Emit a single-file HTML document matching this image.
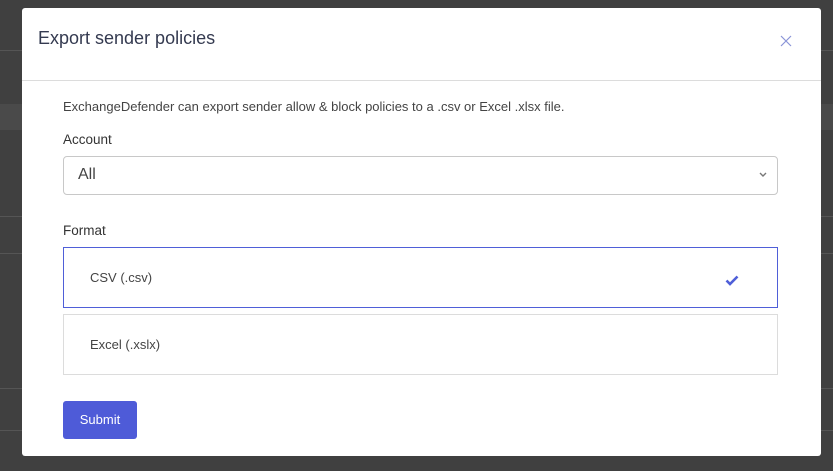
<!DOCTYPE html>
<html><head><style>
body{margin:0;width:833px;height:471px;background:#404040;font-family:"Liberation Sans",sans-serif;position:relative;overflow:hidden}
.bg{position:absolute;left:0;width:833px}
.m{position:absolute;left:22px;top:8px;width:799px;height:448px;background:#fff;border-radius:3px}
.t{position:absolute;left:16px;top:20px;font-size:18px;color:#343a50}
.x{position:absolute;left:758px;top:27px}
.hr{position:absolute;left:0;top:72px;width:799px;height:1px;background:#dcdcdc}
.p{position:absolute;left:41px;top:91px;font-size:13px;color:#444}
.l{position:absolute;left:41px;font-size:13.5px;color:#333}
.sel{position:absolute;left:41px;top:148px;width:713px;height:37px;border:1px solid #c8c8c8;border-radius:4px}
.sel span{position:absolute;left:14px;top:9px;font-size:16px;color:#444}
.box{position:absolute;left:41px;width:715px;border:1px solid #dcdcdc;box-sizing:border-box}
.box span{position:absolute;left:26px;top:22px;font-size:13px;color:#444}
.btn{position:absolute;left:41px;top:393px;width:74px;height:38px;background:#4e5bd8;border-radius:3px;color:#fff;font-size:13px;text-align:center;line-height:38px}
</style></head><body>
<div class="bg" style="top:50px;height:1px;background:#555"></div>
<div class="bg" style="top:104px;height:26px;background:#4a4a4a"></div>
<div class="bg" style="top:216px;height:1px;background:#555"></div>
<div class="bg" style="top:253px;height:1px;background:#555"></div>
<div class="bg" style="top:388px;height:1px;background:#555"></div>
<div class="bg" style="top:430px;height:1px;background:#555"></div>
<div class="m">
<div class="t">Export sender policies</div>
<svg class="x" width="12" height="12" viewBox="0 0 12 12"><path d="M1 1L11 11M11 1L1 11" stroke="#8a94d8" stroke-width="1.2"/></svg>
<div class="hr"></div>
<div class="p">ExchangeDefender can export sender allow &amp; block policies to a .csv or Excel .xlsx file.</div>
<div class="l" style="top:124px">Account</div>
<div class="sel"><span>All</span><svg style="position:absolute;right:10px;top:15px" width="8" height="6" viewBox="0 0 8 6"><path d="M1 1L4 4L7 1" stroke="#777" stroke-width="1.4" fill="none"/></svg></div>
<div class="l" style="top:215px">Format</div>
<div class="box" style="top:239px;height:61px;border-color:#4f5fd8"><span>CSV (.csv)</span><svg style="position:absolute;left:661px;top:27px" width="14" height="11" viewBox="0 0 14 11"><path d="M1.5 5.5L5 9L12.5 1.5" stroke="#4f5fd8" stroke-width="2.6" fill="none"/></svg></div>
<div class="box" style="top:306px;height:61px"><span>Excel (.xslx)</span></div>
<div class="btn">Submit</div>
</div>
</body></html>
